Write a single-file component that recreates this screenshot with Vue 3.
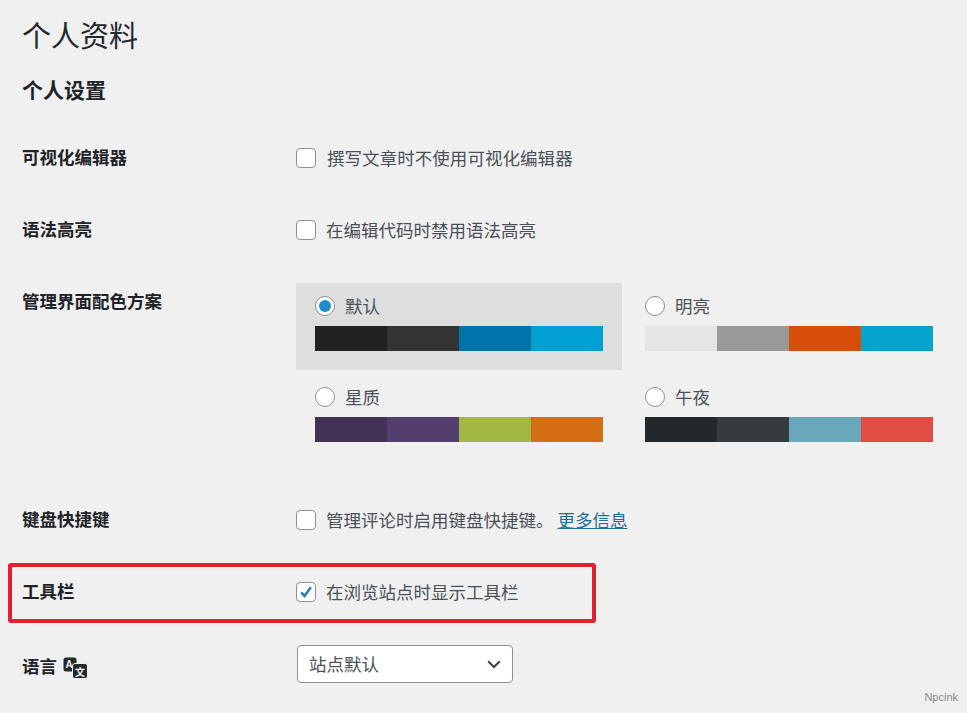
<script setup>
const schemes = [
  { name: '默认', selected: true, colors: ['#222222', '#333333', '#0073aa', '#00a0d2'] },
  { name: '明亮', selected: false, colors: ['#e5e5e5', '#999999', '#d64e07', '#04a4cc'] },
  { name: '星质', selected: false, colors: ['#413256', '#523f6d', '#a3b745', '#d46f15'] },
  { name: '午夜', selected: false, colors: ['#25282b', '#363b3f', '#69a8bb', '#e14d43'] },
]
</script>

<template>
  <main class="page">
    <h1 class="title">个人资料</h1>
    <h2 class="subtitle">个人设置</h2>

    <section class="row">
      <div class="label">可视化编辑器</div>
      <label class="check"><span class="box"></span><span class="t1">撰写文章时不使用可视化编辑器</span></label>
    </section>

    <section class="row">
      <div class="label">语法高亮</div>
      <label class="check"><span class="box"></span><span>在编辑代码时禁用语法高亮</span></label>
    </section>

    <section class="row row-scheme">
      <div class="label">管理界面配色方案</div>
      <div class="schemes">
        <div v-for="s in schemes" :key="s.name" class="scheme" :class="{ selected: s.selected }">
          <div class="scheme-head">
            <span class="radio" :class="{ on: s.selected }"></span>
            <span>{{ s.name }}</span>
          </div>
          <div class="swatches">
            <span v-for="c in s.colors" :key="c" class="swatch" :style="{ background: c }"></span>
          </div>
        </div>
      </div>
    </section>

    <section class="row">
      <div class="label">键盘快捷键</div>
      <label class="check"><span class="box"></span><span>管理评论时启用键盘快捷键。</span><a class="more">更多信息</a></label>
    </section>

    <section class="row row-mark">
      <div class="label">工具栏</div>
      <label class="check">
        <span class="box">
          <svg class="tick" viewBox="0 0 20 20"><path d="M4.6 10.4 8.4 14.4 15.4 4.8" fill="none" stroke="#2a7fae" stroke-width="2.8"/></svg>
        </span>
        <span>在浏览站点时显示工具栏</span>
      </label>
      <div class="mark"></div>
    </section>

    <section class="row row-lang">
      <div class="label lang">
        <span>语言</span>
        <svg class="lang-icon" viewBox="0 0 25 22">
          <rect x="0.5" y="0.5" width="13" height="14" rx="2.5" fill="#23282d"/>
          <text x="2.6" y="11" class="ia">A</text>
          <rect x="9.5" y="6.5" width="15" height="15" rx="2.5" fill="#23282d" stroke="#f0f0f1"/>
          <text x="12" y="18.6" class="ib">文</text>
        </svg>
      </div>
      <div class="select"><span>站点默认</span>
        <svg class="chev" viewBox="0 0 14 9"><path d="M1.2 1.2 7 7 12.8 1.2" fill="none" stroke="#3c434a" stroke-width="2"/></svg>
      </div>
    </section>

    <div class="wm">Npcink</div>
  </main>
</template>

<style>
html, body { margin: 0; background: #f0f0f1; }
</style>

<style scoped>
.page {
  position: relative;
  width: 967px;
  height: 713px;
  overflow: hidden;
  box-sizing: border-box;
  padding: 14px 0 0 22px;
  background: #f0f0f1;
  color: #4a5056;
  font-family: "Noto Sans CJK SC", "Liberation Sans", sans-serif;
  font-size: 17.5px;
  line-height: 24px;
}
.title {
  margin: 0;
  font-size: 29px;
  line-height: 40px;
  font-weight: 400;
  color: #23282d;
}
.subtitle {
  margin: 19px 0 17px;
  font-size: 21px;
  line-height: 32px;
  font-weight: 700;
  color: #1d2327;
}
.row {
  display: flex;
  height: 72px;
  box-sizing: border-box;
  padding-top: 24px;
  position: relative;
}
.row-scheme { height: 218px; }
.label {
  width: 275px;
  flex: none;
  font-weight: 700;
  color: #1d2327;
  margin-top: -1px;
}
.check { display: flex; align-items: center; height: 24px; }
.box {
  width: 20px;
  height: 20px;
  box-sizing: border-box;
  border: 1px solid #8c8f94;
  border-radius: 4px;
  background: #fff;
  margin: 0 10px 0 -1px;
  flex: none;
  display: block;
}
.t1 { letter-spacing: 0.05px; margin-left: 1px; }
.tick { display: block; width: 18px; height: 18px; }
.more { color: #1a6f96; text-decoration: underline; margin-left: 4px; }
.schemes {
  display: grid;
  grid-template-columns: 326px 326px;
  column-gap: 4px;
  row-gap: 4px;
  margin: -7px 0 0 -1px;
  align-content: start;
}
.scheme {
  height: 87px;
  box-sizing: border-box;
  padding: 11px 19px 0;
}
.scheme.selected { background: #dedede; }
.scheme-head { display: flex; align-items: center; height: 24px; gap: 10px; }
.radio {
  width: 20px;
  height: 20px;
  box-sizing: border-box;
  border: 1px solid #8c8f94;
  border-radius: 50%;
  background: #fff;
  display: flex;
  align-items: center;
  justify-content: center;
}
.radio.on::before {
  content: "";
  width: 12px;
  height: 12px;
  border-radius: 50%;
  background: #1e8cc9;
}
.swatches { display: flex; height: 25px; margin-top: 8px; }
.swatch { flex: 1; }
.mark {
  position: absolute;
  left: -14px;
  top: 7px;
  width: 588px;
  height: 60px;
  box-sizing: border-box;
  border: 4px solid #e0202e;
  border-radius: 3px;
}
.lang { display: flex; align-items: center; height: 24px; margin-top: 2px; }
.lang-icon { width: 25px; height: 22px; margin-left: 6px; margin-top: 4px; }
.ia { font: 700 10px "Liberation Sans", sans-serif; fill: #f0f0f1; }
.ib { font: 700 10px "Noto Sans CJK SC", sans-serif; fill: #f0f0f1; }
.select {
  width: 216px;
  height: 38px;
  box-sizing: border-box;
  margin-top: -7px;
  border: 1px solid #8c8f94;
  border-radius: 4px;
  background: #fff;
  display: flex;
  align-items: center;
  justify-content: space-between;
  padding: 0 11px;
}
.chev { width: 14px; height: 9px; }
.wm {
  position: absolute;
  right: 9px;
  bottom: 9px;
  font: 11px/14px "Liberation Sans", sans-serif;
  color: #8a8a8a;
}
</style>
